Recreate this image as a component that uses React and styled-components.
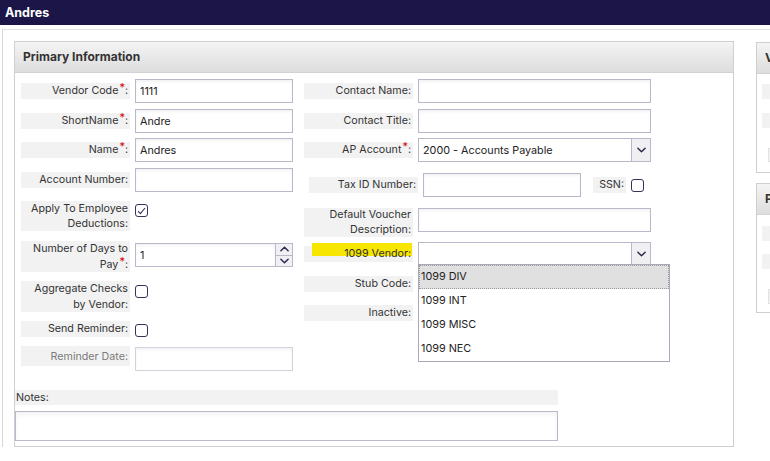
import React from "react";
import styled, { createGlobalStyle } from "styled-components";

const GlobalStyle = createGlobalStyle`
  html, body {
    margin: 0;
    padding: 0;
    overflow: hidden;
    background: #ffffff;
    font-family: Inter, "Noto Sans", sans-serif;
    color: #333;
  }
`;

const TopBar = styled.div`
  height: 25px;
  background: #1b1548;
  color: #fff;
  font-weight: 700;
  font-size: 12.5px;
  line-height: 25px;
  padding-left: 5px;
`;

const Body = styled.div`
  margin: 4px 0 0 2px;
  border-top: 1px solid #e3e3e3;
  border-left: 1px solid #d6d6d6;
  padding: 11px 0 0 11px;
  display: flex;
  align-items: flex-start;
  gap: 22px;
  width: 1100px;
`;

const Panel = styled.div`
  width: ${(p) => p.$w}px;
  border: 1px solid #cfcfcf;
  background: #fff;
  margin-top: ${(p) => p.$mt || 0}px;
  height: ${(p) => (p.$h ? `${p.$h}px` : "auto")};
  box-sizing: border-box;
`;

const PanelHeader = styled.div`
  height: 30px;
  line-height: 30px;
  background: linear-gradient(#f4f4f4, #dddddd);
  border-bottom: 1px solid #d2d2d2;
  font-weight: 700;
  font-size: 12px;
  color: #333;
  padding-left: 8px;
  white-space: nowrap;
  overflow: hidden;
`;

const Columns = styled.div`
  display: flex;
  gap: 12px;
  padding: 6px 0 0 6px;
`;

const Column = styled.div`
  display: flex;
  flex-direction: column;
  width: ${(p) => p.$w}px;
`;

const Row = styled.div`
  display: flex;
  align-items: ${(p) => p.$align || "center"};
  gap: ${(p) => (p.$gap != null ? p.$gap : 5)}px;
  margin-top: ${(p) => p.$mt || 0}px;
  padding-left: ${(p) => p.$pl || 0}px;
`;

const Label = styled.div`
  position: relative;
  flex: none;
  width: ${(p) => p.$w || 109}px;
  background: #f2f2f2;
  text-align: right;
  font-size: 10.7px;
  line-height: ${(p) => p.$lh || 15}px;
  padding: ${(p) => p.$pad || "0"};
  padding-right: 2px;
  box-sizing: border-box;
  color: ${(p) => (p.$muted ? "#7a7a7a" : "#333")};
  white-space: nowrap;
`;

const LabelText = styled.span`
  position: relative;
  z-index: 1;
`;

const Highlight = styled.span`
  position: absolute;
  left: 8px;
  top: -3px;
  width: 100px;
  height: 13px;
  background: #f6e600;
  z-index: 0;
`;

const Req = styled.sup`
  color: #d40000;
  font-size: 11px;
  line-height: 0;
  vertical-align: 3px;
  margin-left: 1px;
`;

const TextInput = styled.input`
  width: ${(p) => p.$w}px;
  height: ${(p) => p.$h || 24}px;
  box-sizing: border-box;
  border: 1px solid ${(p) => (p.$muted ? "#d2d2dc" : "#b9b9cc")};
  box-shadow: inset 0 2px 3px rgba(0, 0, 0, 0.05);
  padding: 0 4px;
  font-family: Inter, "Noto Sans", sans-serif;
  font-size: 10.8px;
  color: #222;
  background: #fff;
  outline: none;
  margin-top: ${(p) => p.$mt || 0}px;
`;

const NumberBox = styled.div`
  display: flex;
  width: 158px;
  height: 24px;
  box-sizing: border-box;
  border: 1px solid #b9b9cc;
  margin-top: 2px;
`;

const BareInput = styled.input`
  flex: 1;
  min-width: 0;
  border: none;
  outline: none;
  padding: 0 4px;
  font-family: Inter, "Noto Sans", sans-serif;
  font-size: 10.8px;
  color: #222;
  box-shadow: inset 0 2px 3px rgba(0, 0, 0, 0.05);
`;

const Spinner = styled.div`
  width: 16px;
  display: flex;
  flex-direction: column;
  border-left: 1px solid #b9b9cc;
`;

const SpinButton = styled.div`
  flex: 1;
  display: flex;
  align-items: center;
  justify-content: center;
  background: #f1f1f4;
  border-top: ${(p) => (p.$bottom ? "1px solid #b9b9cc" : "none")};
`;

const SelectBox = styled.div`
  position: relative;
  display: flex;
  width: 234px;
  height: ${(p) => p.$h || 24}px;
  box-sizing: border-box;
  border: 1px solid #b9b9cc;
  background: #fff;
  font-size: 10.8px;
  color: #222;
`;

const SelectValue = styled.div`
  flex: 1;
  padding-left: 4px;
  display: flex;
  align-items: center;
`;

const SelectButton = styled.div`
  width: 18px;
  border-left: 1px solid #b9b9cc;
  background: #f0f0f2;
  display: flex;
  align-items: center;
  justify-content: center;
`;

const Menu = styled.ul`
  position: absolute;
  left: -1px;
  top: 100%;
  width: 250px;
  margin: 0;
  padding: 0;
  list-style: none;
  background: #fff;
  border: 1px solid #a9a9b9;
  z-index: 5;
`;

const MenuItem = styled.li`
  height: 24px;
  line-height: 22px;
  padding-left: 1px;
  font-size: 10.8px;
  color: #222;
  box-sizing: border-box;
  border: 1px ${(p) => (p.$active ? "dotted #9a9a9a" : "solid transparent")};
  background: ${(p) => (p.$active ? "#e0e0e0" : "#fff")};
`;

const Box = styled.span`
  flex: none;
  display: inline-flex;
  align-items: center;
  justify-content: center;
  width: 13px;
  height: 13px;
  box-sizing: border-box;
  border: 1.5px solid #36325c;
  border-radius: 3px;
  background: #fff;
  margin-top: ${(p) => p.$mt || 0}px;
`;

const Notes = styled.div`
  width: 543px;
  margin: 19px 0 0 0;
  padding-bottom: 5px;
`;

const NotesLabel = styled.div`
  background: #f2f2f2;
  font-size: 10.7px;
  line-height: 15px;
  color: #333;
  padding-left: 1px;
`;

const NotesArea = styled.textarea`
  display: block;
  width: 543px;
  height: 30px;
  margin-top: 6px;
  box-sizing: border-box;
  border: 1px solid #b9b9cc;
  box-shadow: inset 0 3px 4px rgba(0, 0, 0, 0.05);
  resize: none;
  outline: none;
`;

const SideColumn = styled.div`
  display: flex;
  flex-direction: column;
  gap: 10px;
`;

const SideBody = styled.div`
  display: flex;
  flex-direction: column;
  padding: ${(p) => p.$pad};
`;

const SideLabel = styled.div`
  width: ${(p) => p.$w || 109}px;
  height: ${(p) => p.$h || 15}px;
  margin-top: ${(p) => p.$mt || 0}px;
  margin-left: ${(p) => p.$ml || 0}px;
  background: #f2f2f2;
  border: ${(p) => (p.$outline ? "1px solid #e2e2e2" : "none")};
  box-sizing: border-box;
`;

const Chevron = ({ up }) => (
  <svg width="9" height="6" viewBox="0 0 10 6">
    <path
      d={up ? "M1 5 L5 1 L9 5" : "M1 1 L5 5 L9 1"}
      fill="none"
      stroke="#2b2850"
      strokeWidth="1.6"
      strokeLinecap="round"
      strokeLinejoin="round"
    />
  </svg>
);

const Check = () => (
  <svg width="9" height="8" viewBox="0 0 9 8">
    <path d="M1 4.2 L3.4 6.6 L8 1" fill="none" stroke="#36325c" strokeWidth="1.1" />
  </svg>
);

export default function App() {
  return (
    <>
      <GlobalStyle />
      <TopBar>Andres</TopBar>
      <Body>
        <Panel $w={720}>
          <PanelHeader>Primary Information</PanelHeader>
          <Columns>
            <Column $w={271}>
              <Row>
                <Label $lh={16}>
                  Vendor Code<Req>*</Req>:
                </Label>
                <TextInput $w={158} defaultValue="1111" />
              </Row>
              <Row $mt={6}>
                <Label $lh={16}>
                  ShortName<Req>*</Req>:
                </Label>
                <TextInput $w={158} defaultValue="Andre" />
              </Row>
              <Row $mt={5}>
                <Label $lh={16}>
                  Name<Req>*</Req>:
                </Label>
                <TextInput $w={158} defaultValue="Andres" />
              </Row>
              <Row $mt={6}>
                <Label $lh={16}>Account Number:</Label>
                <TextInput $w={158} />
              </Row>
              <Row $mt={9} $align="flex-start">
                <Label>
                  Apply To Employee
                  <br />
                  Deductions:
                </Label>
                <Box $mt={3}>
                  <Check />
                </Box>
              </Row>
              <Row $mt={10} $align="flex-start">
                <Label $lh={15.5}>
                  Number of Days to
                  <br />
                  Pay<Req>*</Req>:
                </Label>
                <NumberBox>
                  <BareInput defaultValue="1" />
                  <Spinner>
                    <SpinButton>
                      <Chevron up />
                    </SpinButton>
                    <SpinButton $bottom>
                      <Chevron />
                    </SpinButton>
                  </Spinner>
                </NumberBox>
              </Row>
              <Row $mt={9} $align="flex-start">
                <Label $lh={15.5}>
                  Aggregate Checks
                  <br />
                  by Vendor:
                </Label>
                <Box $mt={4} />
              </Row>
              <Row $mt={9} $align="flex-start">
                <Label $lh={16}>Send Reminder:</Label>
                <Box $mt={3} />
              </Row>
              <Row $mt={9} $align="flex-start">
                <Label $lh={15} $pad="3px 0 2px 0" $muted>
                  Reminder Date:
                </Label>
                <TextInput $w={158} $muted $mt={1} />
              </Row>
            </Column>

            <Column $w={347}>
              <Row>
                <Label $lh={16}>Contact Name:</Label>
                <TextInput $w={234} />
              </Row>
              <Row $mt={6}>
                <Label $lh={16}>Contact Title:</Label>
                <TextInput $w={234} />
              </Row>
              <Row $mt={5}>
                <Label $lh={16}>
                  AP Account<Req>*</Req>:
                </Label>
                <SelectBox>
                  <SelectValue>2000 - Accounts Payable</SelectValue>
                  <SelectButton>
                    <Chevron />
                  </SelectButton>
                </SelectBox>
              </Row>
              <Row $mt={11} $pl={5} $gap={0}>
                <Label $lh={16}>Tax ID Number:</Label>
                <TextInput $w={158} style={{ marginLeft: 5 }} />
                <Label $w={33} $lh={16} style={{ marginLeft: 12 }}>
                  SSN:
                </Label>
                <Box style={{ marginLeft: 5 }} />
              </Row>
              <Row $mt={11} $align="flex-start">
                <Label $lh={14.5}>
                  Default Voucher
                  <br />
                  Description:
                </Label>
                <TextInput $w={234} />
              </Row>
              <Row $mt={5}>
                <Label $lh={16}>
                  <Highlight />
                  <LabelText>1099 Vendor:</LabelText>
                </Label>
                <SelectBox $h={23}>
                  <SelectValue />
                  <SelectButton>
                    <Chevron />
                  </SelectButton>
                  <Menu>
                    <MenuItem $active>1099 DIV</MenuItem>
                    <MenuItem>1099 INT</MenuItem>
                    <MenuItem>1099 MISC</MenuItem>
                    <MenuItem>1099 NEC</MenuItem>
                  </Menu>
                </SelectBox>
              </Row>
              <Row $mt={7}>
                <Label $lh={16}>Stub Code:</Label>
                <TextInput $w={234} />
              </Row>
              <Row $mt={9}>
                <Label $lh={16}>Inactive:</Label>
                <Box />
              </Row>
            </Column>
          </Columns>
          <Notes>
            <NotesLabel>Notes:</NotesLabel>
            <NotesArea />
          </Notes>
        </Panel>

        <SideColumn>
          <Panel $w={260} $mt={1} $h={131}>
            <PanelHeader>V</PanelHeader>
            <SideBody $pad="10px 0 0 5px">
              <SideLabel />
              <SideLabel $mt={14} />
              <SideLabel $mt={20} $ml={6} $h={14} $outline />
            </SideBody>
          </Panel>
          <Panel $w={260} $h={130}>
            <PanelHeader>P</PanelHeader>
            <SideBody $pad="11px 0 0 5px">
              <SideLabel />
              <SideLabel $mt={13} />
              <SideLabel $mt={20} $ml={6} $h={15} $outline />
            </SideBody>
          </Panel>
        </SideColumn>
      </Body>
    </>
  );
}
